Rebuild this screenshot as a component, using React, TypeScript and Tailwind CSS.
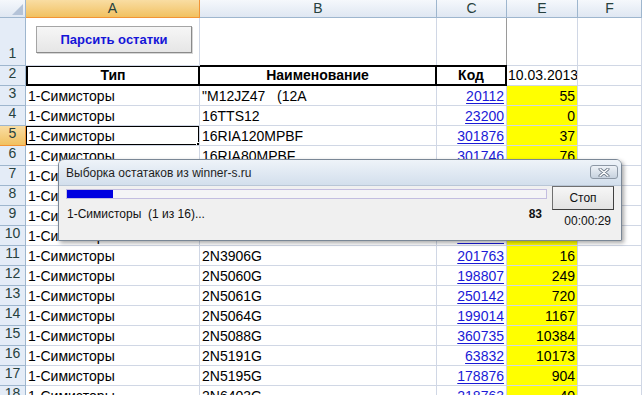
import React from "react";

type Row = { n: number; a: string; b: string; c: string; e: string };

const rows: Row[] = [
  { n: 3, a: "1-Симисторы", b: '"M12JZ47   (12A', c: "20112", e: "55" },
  { n: 4, a: "1-Симисторы", b: "16TTS12", c: "23200", e: "0" },
  { n: 5, a: "1-Симисторы", b: "16RIA120MPBF", c: "301876", e: "37" },
  { n: 6, a: "1-Симисторы", b: "16RIA80MPBF", c: "301746", e: "76" },
  { n: 7, a: "1-Симисторы", b: "16RIA40MPBF", c: "301742", e: "12" },
  { n: 8, a: "1-Симисторы", b: "16TTS08", c: "23198", e: "5" },
  { n: 9, a: "1-Симисторы", b: "25TTS12", c: "23204", e: "8" },
  { n: 10, a: "1-Симисторы", b: "2N3904G", c: "201762", e: "3" },
  { n: 11, a: "1-Симисторы", b: "2N3906G", c: "201763", e: "16" },
  { n: 12, a: "1-Симисторы", b: "2N5060G", c: "198807", e: "249" },
  { n: 13, a: "1-Симисторы", b: "2N5061G", c: "250142", e: "720" },
  { n: 14, a: "1-Симисторы", b: "2N5064G", c: "199014", e: "1167" },
  { n: 15, a: "1-Симисторы", b: "2N5088G", c: "360735", e: "10384" },
  { n: 16, a: "1-Симисторы", b: "2N5191G", c: "63832", e: "10173" },
  { n: 17, a: "1-Симисторы", b: "2N5195G", c: "178876", e: "904" },
  { n: 18, a: "1-Симисторы", b: "2N6403G", c: "218763", e: "40" },
];

const font = { fontFamily: '"Liberation Sans", Arial, sans-serif' };

const colHead =
  "flex items-center justify-center border-r border-b border-[#9eb6ce] bg-gradient-to-b from-[#f5f8fc] to-[#dfe7f2] text-[14px] text-[#27413e]";
const rowHead =
  "flex items-end justify-center pb-[1px] border-r border-b border-[#9eb6ce] bg-[#e4ecf7] text-[14px] text-[#27413e]";
const cell = "border-r border-b border-[#d0d7e5] bg-white text-[14px] text-black whitespace-nowrap overflow-hidden";

export default function App() {
  return (
    <div className="relative w-[642px] h-[395px] overflow-hidden bg-white" style={font}>
      <div className="grid grid-cols-[26px_174px_237px_70px_71px_64px] grid-rows-[18px_48px_20px_repeat(16,20px)]">
        {/* column headers */}
        <div className="relative border-r border-b border-[#9eb6ce] bg-gradient-to-b from-[#f5f8fc] to-[#dfe7f2]">
          <svg className="absolute right-[2px] bottom-[2px]" width="11" height="11" viewBox="0 0 11 11">
            <polygon points="11,0 11,11 0,11" fill="#b4c3d8" />
          </svg>
        </div>
        <div className="flex items-center justify-center border-r border-b border-[#f29436] bg-gradient-to-b from-[#f9dda2] to-[#f1c15f] text-[14px] text-[#27413e]">A</div>
        <div className={colHead}>B</div>
        <div className={colHead}>C</div>
        <div className={colHead}>E</div>
        <div className={colHead}>F</div>

        {/* row 1 */}
        <div className={rowHead}>1</div>
        <div className={`${cell} relative`}>
          <div className="absolute left-[10px] top-[8px] w-[156px] h-[27px] flex items-center justify-center border border-[#a5a5a5] border-r-[#8a8a8a] border-b-[#8a8a8a] bg-gradient-to-b from-[#f6f6f6] to-[#e6e6e6] shadow-[1px_1px_0_#d6d6d6] text-[13px] font-bold text-[#1515d8]">
            Парсить остатки
          </div>
        </div>
        <div className={cell}></div>
        <div className={cell}></div>
        <div className="border-r border-b border-[#d0d7e5] border-l border-l-[#9a9a9a] -ml-px"></div>
        <div className={cell}></div>

        {/* row 2 */}
        <div className={rowHead}>2</div>
        <div className="flex items-center justify-center border-2 border-black bg-white text-[14px] font-bold -mt-px">Тип</div>
        <div className="flex items-center justify-center border-2 border-l-0 border-black bg-white text-[14px] font-bold -mt-px">Наименование</div>
        <div className="flex items-center justify-center border-2 border-l-0 border-black bg-white text-[14px] font-bold -mt-px">Код</div>
        <div className={`${cell} flex items-center justify-center pl-[2px]`}>10.03.2013</div>
        <div className={cell}></div>

        {rows.map((r) => (
          <React.Fragment key={r.n}>
            <div
              className={
                r.n === 5
                  ? "flex items-end justify-center pb-[1px] border-r border-b border-[#f29436] bg-gradient-to-b from-[#f9dda2] to-[#f1c15f] text-[14px] text-[#27413e]"
                  : rowHead
              }
            >
              {r.n}
            </div>
            <div className={`${cell} relative flex items-end pl-[2px]`}>
              <span className="leading-[18px]">{r.a}</span>
              {r.n === 5 && (
                <div className="absolute -left-px -top-px w-[175px] h-[21px] border-2 border-black">
                  <div className="absolute -right-[4px] -bottom-[4px] w-[6px] h-[6px] bg-black border border-white"></div>
                </div>
              )}
            </div>
            <div className={`${cell} flex items-end pl-[2px]`}>
              <span className="leading-[18px] whitespace-pre">{r.b}</span>
            </div>
            <div className={`${cell} flex items-end justify-end pr-[2px]`}>
              <span className="leading-[18px] text-[#1a1ad6] underline underline-offset-2">{r.c}</span>
            </div>
            <div className="border-r border-b border-[#d0d7e5] bg-[#ffff00] flex items-end justify-end pr-[2px] text-[14px] text-black">
              <span className="leading-[18px]">{r.e}</span>
            </div>
            <div className={cell}></div>
          </React.Fragment>
        ))}
      </div>

      {/* progress dialog */}
      <div className="absolute left-[58px] top-[159px] w-[564px] h-[82px] flex flex-col border border-[#7a8796] rounded-t-[6px] overflow-hidden shadow-[2px_2px_4px_rgba(0,0,0,0.35)]">
        <div className="relative h-[25px] shrink-0 flex items-center pl-[7px] bg-gradient-to-b from-[#eef3f9] to-[#d3dfec] text-[12px] text-[#1e1e1e]">
          Выборка остатаков из winner-s.ru
          <div className="absolute right-[3px] top-[5px] w-[28px] h-[14px] flex items-center justify-center rounded-[3px] border border-[#8d98a6] bg-gradient-to-b from-[#eef2f7] to-[#c7d2df]">
            <svg width="12" height="9" viewBox="0 0 12 9">
              <path d="M2 1 L10 8 M10 1 L2 8" stroke="#6b7786" strokeWidth="3" strokeLinecap="round" />
              <path d="M2 1 L10 8 M10 1 L2 8" stroke="#ffffff" strokeWidth="1.4" strokeLinecap="round" />
            </svg>
          </div>
        </div>
        <div className="flex-1 flex bg-[#f0f0f0] border-t border-[#b9c6d6]">
          <div className="ml-[7px] w-[481px] flex flex-col">
            <div className="mt-[3px] h-[10px] border border-[#c3bde0] bg-[#f4f4f6]">
              <div className="h-full w-[46px] bg-[#0000e0]"></div>
            </div>
            <div className="mt-[6px] flex items-center justify-between pr-[5px] text-[12px] text-[#111]">
              <span className="pl-[1px] whitespace-pre">1-Симисторы  (1 из 16)...</span>
              <span className="font-bold">83</span>
            </div>
          </div>
          <div className="ml-[5px] w-[62px] flex flex-col">
            <div className="h-[24px] flex items-center justify-center border border-[#707070] border-r-[#404040] border-b-[#404040] bg-gradient-to-b from-[#f6f6f6] to-[#e3e3e3] text-[12px] text-[#111]">
              Стоп
            </div>
            <div className="mt-[2px] text-right pr-[3px] text-[12px] text-[#111]">00:00:29</div>
          </div>
        </div>
      </div>
    </div>
  );
}
